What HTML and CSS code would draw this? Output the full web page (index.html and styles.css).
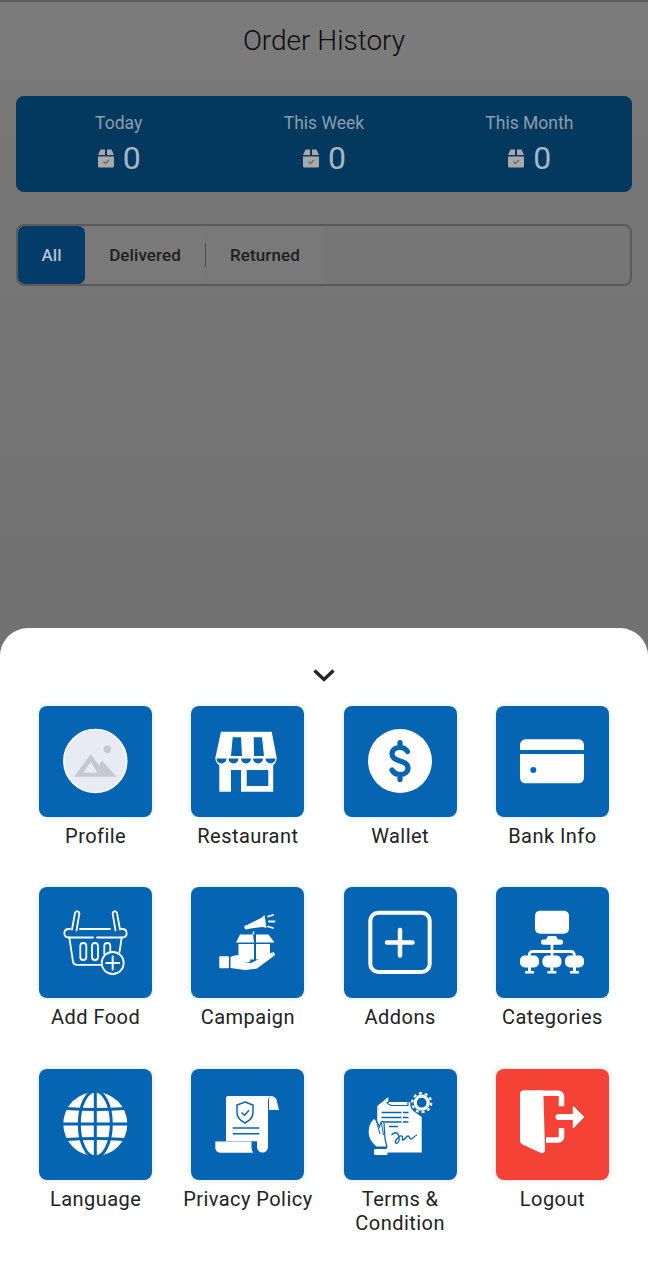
FILE: index.html
```html
<!DOCTYPE html>
<html>
<head>
    <title>Order History</title>
    <link rel="stylesheet" href="styles.css">
</head>
<body>
    <div class="page">
        <header class="topbar">
            <h1>Order History</h1>
        </header>

        <section class="summary">
            <div class="stat">
                <span class="stat-label">Today</span>
                <span class="stat-value">
                    <svg class="bag" viewBox="0 0 18 20"><path d="M1 7 3.500 1.500H8V7ZM10 1.500h4.500L17 7h-7ZM1 8.500h16V18a1.500 1.500 0 0 1-1.500 1.500h-13A1.500 1.500 0 0 1 1 18Z" fill="#a9a9a9"/><path d="m6.500 13.500 2 2 3.500-3.500" fill="none" stroke="#5e6a70" stroke-width="1.300"/></svg>
                    0
                </span>
            </div>
            <div class="stat">
                <span class="stat-label">This Week</span>
                <span class="stat-value">
                    <svg class="bag" viewBox="0 0 18 20"><path d="M1 7 3.500 1.500H8V7ZM10 1.500h4.500L17 7h-7ZM1 8.500h16V18a1.500 1.500 0 0 1-1.500 1.500h-13A1.500 1.500 0 0 1 1 18Z" fill="#a9a9a9"/><path d="m6.500 13.500 2 2 3.500-3.500" fill="none" stroke="#5e6a70" stroke-width="1.300"/></svg>
                    0
                </span>
            </div>
            <div class="stat">
                <span class="stat-label">This Month</span>
                <span class="stat-value">
                    <svg class="bag" viewBox="0 0 18 20"><path d="M1 7 3.500 1.500H8V7ZM10 1.500h4.500L17 7h-7ZM1 8.500h16V18a1.500 1.500 0 0 1-1.500 1.500h-13A1.500 1.500 0 0 1 1 18Z" fill="#a9a9a9"/><path d="m6.500 13.500 2 2 3.500-3.500" fill="none" stroke="#5e6a70" stroke-width="1.300"/></svg>
                    0
                </span>
            </div>
        </section>

        <nav class="tabs">
            <span class="tab tab-active">All</span>
            <span class="tab tab-delivered">Delivered</span>
            <span class="tab-divider"></span>
            <span class="tab tab-returned">Returned</span>
        </nav>
    </div>

    <div class="sheet">
        <div class="sheet-handle">
            <svg width="24" height="14" viewBox="0 0 24 14"><path d="M2.500 2.500 12 11.500l9.500-9" fill="none" stroke="#23252a" stroke-width="3.400"/></svg>
        </div>

        <div class="menu">
            <a class="item">
                <span class="tile">
                    <svg viewBox="0 0 113 111">
                        <circle cx="56.300" cy="55" r="31.500" fill="#e8ebf3" stroke="#fff" stroke-width="1.500"/>
                        <circle cx="68.300" cy="43.300" r="3.700" fill="#c3c8d2"/>
                        <path fill-rule="evenodd" d="M51.700 48 60 59.500l3-4.800 14.700 16H35.300ZM51.700 55.700 44.300 66.700h14Z" fill="#c3c8d2"/>
                    </svg>
                </span>
                <span class="item-label">Profile</span>
            </a>
            <a class="item">
                <span class="tile">
                    <svg viewBox="0 0 113 111">
                        <path d="M30 25.700h50.700l5 26.300q0 5-3.500 7v26.700H28.300V59q-4-2-4-7Z" fill="#fff"/>
                        <path d="M41.700 31.300H50l1 18.700H40ZM62.700 31.300H71l2 18.700H63Z" fill="#0665b3"/>
                        <path d="M25.500 52.500h10a5 5 0 0 1-10 0ZM37.500 52.500h10a5 5 0 0 1-10 0ZM50 52.500h10a5 5 0 0 1-10 0ZM62 52.500h10a5 5 0 0 1-10 0ZM74.500 52.500h10a5 5 0 0 1-10 0Z" fill="#0665b3"/>
                        <path d="M40 64h10v22H40ZM55.700 64h21.600v16H55.700Z" fill="#0665b3"/>
                    </svg>
                </span>
                <span class="item-label">Restaurant</span>
            </a>
            <a class="item">
                <span class="tile">
                    <svg viewBox="0 0 113 111">
                        <circle cx="56" cy="55" r="32" fill="#fff"/>
                        <path d="M63.500 45.500C62 43 59 41.500 56 41.500c-4.800 0-8 2.700-8 6.500 0 4 3.500 5.800 8 7 4.500 1.200 8 3 8 7 0 3.800-3.200 6.500-8 6.500-3.500 0-6.500-1.500-8-4.500M56 36.500v5M56 68.500v5" fill="none" stroke="#0665b3" stroke-width="5.200" stroke-linecap="round"/>
                    </svg>
                </span>
                <span class="item-label">Wallet</span>
            </a>
            <a class="item">
                <span class="tile">
                    <svg viewBox="0 0 113 111">
                        <rect x="24" y="33.300" width="64" height="44" rx="5.500" fill="#fff"/>
                        <rect x="24" y="44" width="64" height="4" fill="#0665b3"/>
                        <circle cx="37.300" cy="64" r="3" fill="#0665b3"/>
                    </svg>
                </span>
                <span class="item-label">Bank Info</span>
            </a>

            <a class="item">
                <span class="tile">
                    <svg viewBox="0 0 113 111" fill="none" stroke="#fff" stroke-width="1.800" stroke-linecap="round" stroke-linejoin="round">
                        <path d="M31 42H29a4.300 4.300 0 0 0 0 8.500h25M58 50.500h26a4.300 4.300 0 0 0 0-8.500h-2M41 42h30"/>
                        <path d="M33 42.500 36 26a2.200 2.200 0 0 1 4.300.800L37.500 43.500M81 42.500 78 26a2.200 2.200 0 0 0-4.300.800L76.500 43.500"/>
                        <path d="M30.300 50.500 34 74.500a4 4 0 0 0 4 3.300h24.500M82.700 50.500 80.500 65"/>
                        <rect x="41.300" y="56" width="6" height="17" rx="3"/>
                        <rect x="53" y="56" width="6" height="17" rx="3"/>
                        <path d="M65.300 67V59a3 3 0 0 1 6 0v5"/>
                        <circle cx="73.700" cy="76" r="11"/>
                        <path d="M73.700 69.500v13M67.200 76h13" stroke-width="2"/>
                    </svg>
                </span>
                <span class="item-label">Add Food</span>
            </a>
            <a class="item">
                <span class="tile">
                    <svg viewBox="0 0 113 111">
                        <path d="M55 38.500 70 31l3.500-3 2 13-4-1-12 1.500-4.500 1a2.500 2.500 0 0 1-.500-4.500Z" fill="#fff"/>
                        <path d="M77 29.500l5-1.500M78 34.500h5.500M77 39.500l5 1.500" stroke="#fff" stroke-width="1.800" fill="none" stroke-linecap="round"/>
                        <path d="M62.500 44.500v3" stroke="#fff" stroke-width="1.500"/>
                        <path d="M49 47.500h13L63 55.500H45ZM65 47.500h12.500l6 8H65Z" fill="#fff"/>
                        <path d="M47.500 57h15.500v15.500H47.500ZM65 57h14v10l-8.500 5-5.500.500Z" fill="#fff"/>
                        <rect x="28.300" y="69.300" width="9.700" height="12" rx="1" fill="#fff"/>
                        <path d="M39.500 70c4-2 8-2.500 12-1l7 2.500a2.500 2.500 0 0 1-.500 3.800l-6 .200 8 .500 21-10.500a2 2 0 0 1 2.500 3L66 81.500 54 83l-14.500-2Z" fill="#fff"/>
                    </svg>
                </span>
                <span class="item-label">Campaign</span>
            </a>
            <a class="item">
                <span class="tile">
                    <svg viewBox="0 0 113 111">
                        <rect x="26.300" y="25.700" width="59.400" height="59.300" rx="8" fill="none" stroke="#fff" stroke-width="4"/>
                        <path d="M43 55.500h25.500M56 43v25.500" fill="none" stroke="#fff" stroke-width="4.500" stroke-linecap="round"/>
                    </svg>
                </span>
                <span class="item-label">Addons</span>
            </a>
            <a class="item">
                <span class="tile">
                    <svg viewBox="0 0 113 111" fill="#fff">
                        <rect x="39" y="23.700" width="34" height="23" rx="5"/>
                        <path d="M52 49h8l2 3.500h2.500a2.600 2.600 0 0 1 0 5.200h-17a2.600 2.600 0 0 1 0-5.200H50Z"/>
                        <path d="M56 57v13M33.300 70v-2.500a3 3 0 0 1 3-3h39a3 3 0 0 1 3 3V70" fill="none" stroke="#fff" stroke-width="2.800"/>
                        <rect x="24" y="68.500" width="19" height="12" rx="5"/>
                        <rect x="46.400" y="68.500" width="19" height="12" rx="5"/>
                        <rect x="69" y="68.500" width="19" height="12" rx="5"/>
                        <path d="M32 80h3v4h3v2.500H29V84h3ZM54.400 80h3v4h3v2.500h-9V84h3ZM77 80h3v4h3v2.500h-9V84h3Z"/>
                    </svg>
                </span>
                <span class="item-label">Categories</span>
            </a>

            <a class="item">
                <span class="tile">
                    <svg viewBox="0 0 113 111">
                        <circle cx="56.300" cy="55" r="32" fill="#fff"/>
                        <g fill="none" stroke="#0665b3" stroke-width="3">
                            <path d="M24 55h65M56.300 22v66"/>
                            <ellipse cx="56.300" cy="55" rx="16" ry="33"/>
                            <path d="M27 39.500q29.300 2 58.600 0M27 70.500q29.300-2 58.600 0"/>
                        </g>
                    </svg>
                </span>
                <span class="item-label">Language</span>
            </a>
            <a class="item">
                <span class="tile">
                    <svg viewBox="0 0 113 111">
                        <path d="M37 27h43q-3 1-3 5v46a5.500 5.500 0 0 1-11 0v-5.700H35V29a2 2 0 0 1 2-2Z" fill="#fff"/>
                        <path d="M80 27a6 6 0 0 1 6 6l2 8H78v-9a5 5 0 0 1 2-5Z" fill="#fff"/>
                        <path d="M24.300 72.500H60.500v6q0 3 1.500 5.200H29a5 5 0 0 1-4.700-5Z" fill="#fff"/>
                        <path d="M54 33l8 3v7.500q0 6.500-8 10.500-8-4-8-10.500V36Z" fill="none" stroke="#0665b3" stroke-width="1.500"/>
                        <path d="m50.500 43.500 3 2.700 4.500-5" fill="none" stroke="#0665b3" stroke-width="1.500"/>
                        <path d="M41.700 59h26.600M41.700 64.700h26.600" stroke="#0665b3" stroke-width="1.400"/>
                    </svg>
                </span>
                <span class="item-label">Privacy Policy</span>
            </a>
            <a class="item">
                <span class="tile">
                    <svg viewBox="0 0 113 111">
                        <path d="M33.300 37l11-9v5h22v3.500q0 3 3 5.500l8.400 6v35.500h-35V75q-3-5-5.500-9l-4-4Z" fill="#fff"/>
                        <path d="M47 31.500h17v5H47l-4-2.500Z" fill="none" stroke="#0665b3" stroke-width="1.200"/>
                        <path d="M37.500 43.500h27M37.500 48.500h27M37.500 53h27M45 57.500h9" fill="none" stroke="#0665b3" stroke-width="1.500" stroke-dasharray="20 1.500"/>
                        <path d="M47.500 66c3-3 6-3 7 0s1 7-1 8-3-1-1.500-3 4-5 6-4-1 4 1 4 3-4 5-4 1 3 3 3 3-3 6-4" fill="none" stroke="#0665b3" stroke-width="1.300"/>
                        <path d="M29 50q2-1 3.500 2l3 6 1.500-5q2-1 3 1l1 16 2 8H32q-8-7-8-15 0-8 5-13Z" fill="#fff" stroke="#0665b3" stroke-width="1.200"/>
                        <path d="M32.500 52l3.500 13M37.500 54l2 12" fill="none" stroke="#0665b3" stroke-width="1"/>
                        <rect x="30" y="80" width="13.500" height="6" rx="1" fill="#fff"/>
                        <circle cx="77.700" cy="33.700" r="6.500" fill="none" stroke="#fff" stroke-width="3.200"/>
                        <circle cx="77.700" cy="33.700" r="9.500" fill="none" stroke="#fff" stroke-width="2.200" stroke-dasharray="3 2.950"/>
                    </svg>
                </span>
                <span class="item-label">Terms &amp; Condition</span>
            </a>
            <a class="item">
                <span class="tile tile-red">
                    <svg viewBox="0 0 113 111">
                        <path d="M28 21.300H47.300L49 81a3 3 0 0 1-4 3L26.500 75.500A4 4 0 0 1 24 72V25a4 4 0 0 1 4-3.700Z" fill="#fff"/>
                        <path d="M47 24.300H62.500a3 3 0 0 1 3 3V37.300M65.500 59v9a3 3 0 0 1-3 3H50" fill="none" stroke="#fff" stroke-width="5.500"/>
                        <path d="M62.500 48H77.500" fill="none" stroke="#fff" stroke-width="6" stroke-linecap="round"/>
                        <path d="M77.300 37.300 88 48 77.300 59Z" fill="#fff" stroke="#fff" stroke-width="1" stroke-linejoin="round"/>
                    </svg>
                </span>
                <span class="item-label">Logout</span>
            </a>
        </div>
    </div>
</body>
</html>
```

FILE: styles.css
```css
* {
    box-sizing: border-box;
}

body {
    margin: 0;
    height: 1280px;
    overflow: hidden;
    position: relative;
    font-family: Roboto, sans-serif;
    background-color: #727272;
}

/* Fundo escurecido */
.page {
    height: 640px;
    background: linear-gradient(#797979, #717171);
    padding-bottom: 20px;
}

.topbar {
    height: 80px;
    background-color: #7b7b7b;
    border-top: 2px solid #5c5c5c;
    padding-bottom: 2px;
    display: flex;
    align-items: center;
    justify-content: center;
}

.topbar h1 {
    margin: 0;
    font-size: 28px;
    font-weight: 300;
    color: #0c0c0c;
}

.summary {
    margin: 16px 16px 0;
    height: 96px;
    border-radius: 8px;
    background-color: #03395f;
    display: grid;
    grid-template-columns: repeat(3, 1fr);
    align-items: center;
}

.stat {
    display: flex;
    flex-direction: column;
    align-items: center;
    gap: 5px;
}

.stat-label {
    font-size: 17.5px;
    line-height: 22px;
    color: #8c9dab;
}

.stat-value {
    display: flex;
    align-items: center;
    gap: 8px;
    font-size: 32px;
    line-height: 38px;
    color: #a6b6c4;
}

.bag {
    width: 18px;
    height: 20px;
}

.tabs {
    margin: 32px 16px 0;
    height: 62px;
    border: 2px solid #5a5a5a;
    border-radius: 8px;
    display: flex;
    align-items: center;
}

.tab {
    height: 100%;
    display: flex;
    align-items: center;
    justify-content: center;
    font-size: 17px;
    font-weight: 500;
    letter-spacing: 0.1px;
    color: #1f1f1f;
    background-color: #797979;
}

.tab-active {
    width: 67px;
    border-radius: 7px;
    background-color: #033c68;
    color: #b4c2cf;
}

.tab-delivered {
    width: 120px;
}

.tab-returned {
    width: 118px;
}

.tab-divider {
    width: 1px;
    height: 24px;
    background-color: #4e4e4e;
}

/* Painel inferior */
.sheet {
    position: absolute;
    left: 0;
    right: 0;
    top: 628px;
    bottom: 0;
    background-color: #fff;
    border-radius: 28px 28px 0 0;
}

.sheet-handle {
    height: 78px;
    display: flex;
    justify-content: center;
    padding-top: 40px;
}

.sheet-handle svg {
    display: block;
}

.menu {
    padding: 0 19.5px;
    display: grid;
    grid-template-columns: repeat(4, 1fr);
    row-gap: 39.4px;
}

.item {
    display: flex;
    flex-direction: column;
    align-items: center;
    min-height: 142px;
}

.tile {
    width: 113px;
    height: 111px;
    border-radius: 8px;
    background-color: #0665b3;
    box-shadow: 0 0 6px rgba(6, 101, 179, 0.15);
}

.tile svg {
    display: block;
    width: 113px;
    height: 111px;
}

.tile-red {
    background-color: #f44336;
    box-shadow: 0 0 6px rgba(244, 67, 54, 0.2);
}

.item-label {
    margin-top: 7px;
    width: 136px;
    text-align: center;
    font-size: 20px;
    letter-spacing: 0.45px;
    line-height: 24px;
    color: #222;
}
```
